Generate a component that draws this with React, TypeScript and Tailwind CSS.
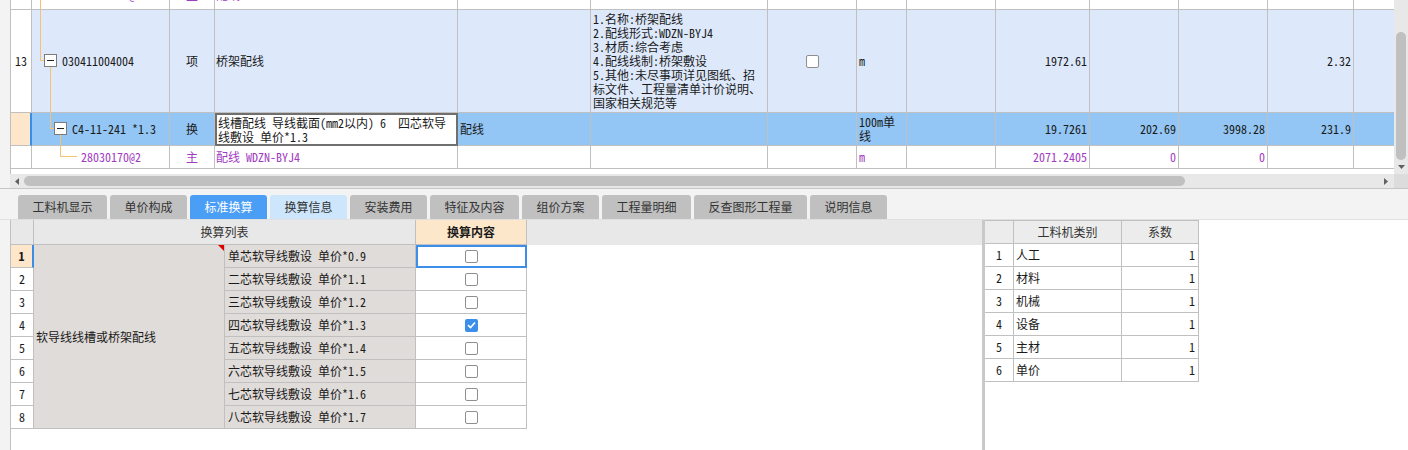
import React from "react";

const mono = "font-[family-name:'Noto_Sans_Mono_CJK_SC','Noto_Sans_CJK_SC',monospace]";
const purple = "text-[#a13bc2]";

// top grid column widths (incl. right border)
const W = [
  "w-[21px]", "w-[138px]", "w-[45px]", "w-[243px]", "w-[133px]", "w-[177px]", "w-[89px]",
  "w-[50px]", "w-[89px]", "w-[94px]", "w-[89px]", "w-[89px]", "w-[86px]", "w-[40px]",
];

const Cell = ({ i, className = "", children }: { i: number; className?: string; children?: React.ReactNode }) => (
  <div
    className={`${W[i]} shrink-0 h-full border-b border-[#c0c0c0] ${i < 13 ? "border-r" : ""} flex items-center overflow-hidden ${className}`}
  >
    {children}
  </div>
);

const Line = ({ className }: { className: string }) => <span className={`absolute bg-[#f6c26e] ${className}`} />;

const TreeBox = ({ className }: { className: string }) => (
  <span className={`absolute w-[13px] h-[13px] border border-[#7c7c7c] bg-white flex items-center justify-center ${className}`}>
    <span className="w-[7px] h-[1px] bg-[#222]" />
  </span>
);

const Check = ({ on = false }: { on?: boolean }) =>
  on ? (
    <span className="w-[13px] h-[13px] rounded-[2px] bg-[#3b8fe8] flex items-center justify-center">
      <svg width="9" height="8" viewBox="0 0 9 8">
        <path d="M1 4.2 L3.5 6.5 L8 1.5" stroke="white" strokeWidth="1.6" fill="none" />
      </svg>
    </span>
  ) : (
    <span className="w-[13px] h-[13px] rounded-[2px] border border-[#8f8f8f] bg-white" />
  );

const tabs = [
  { t: "工料机显示", w: "w-[89px]" },
  { t: "单价构成", w: "w-[77px]" },
  { t: "标准换算", w: "w-[77px]", active: true },
  { t: "换算信息", w: "w-[77px]", light: true },
  { t: "安装费用", w: "w-[77px]" },
  { t: "特征及内容", w: "w-[89px]" },
  { t: "组价方案", w: "w-[77px]" },
  { t: "工程量明细", w: "w-[89px]" },
  { t: "反查图形工程量", w: "w-[113px]" },
  { t: "说明信息", w: "w-[77px]" },
];

const conv = [
  "单芯软导线敷设 单价*0.9",
  "二芯软导线敷设 单价*1.1",
  "三芯软导线敷设 单价*1.2",
  "四芯软导线敷设 单价*1.3",
  "五芯软导线敷设 单价*1.4",
  "六芯软导线敷设 单价*1.5",
  "七芯软导线敷设 单价*1.6",
  "八芯软导线敷设 单价*1.7",
];

const kinds = ["人工", "材料", "机械", "设备", "主材", "单价"];

export default function App() {
  return (
    <div className={`w-[1408px] h-[450px] overflow-hidden bg-[#f3f3f3] flex flex-col text-[12px] text-[#1a1a1a] ${mono}`}>
      {/* top grid */}
      <div className="flex h-[188px] shrink-0">
        <div className="w-[10px] shrink-0" />
        <div className="w-[1384px] shrink-0 flex flex-col">
          <div className="h-[174px] bg-white border-l border-[#c0c0c0] overflow-hidden flex flex-col">
            {/* partial row */}
            <div className={`flex h-[29px] -mt-[19px] shrink-0 ${purple}`}>
              <Cell i={0} />
              <Cell i={1} className="relative pl-[49px]">
                <Line className="left-[8px] top-0 bottom-0 w-[1px]" />
                28030170@1
              </Cell>
              <Cell i={2} className="justify-center">主</Cell>
              <Cell i={3} className="pl-[1px]">配线 WDZN-BYJ4</Cell>
              <Cell i={4} />
              <Cell i={5} />
              <Cell i={6} />
              <Cell i={7} className="pl-[2px]">m</Cell>
              <Cell i={8} />
              <Cell i={9} className="justify-end pr-[2px]">2271.0226</Cell>
              <Cell i={10} className="justify-end pr-[2px]">0</Cell>
              <Cell i={11} className="justify-end pr-[2px]">0</Cell>
              <Cell i={12} />
              <Cell i={13} />
            </div>
            {/* row 13 */}
            <div className="flex h-[103px] shrink-0 bg-[#dde9fb]">
              <Cell i={0} className="justify-center bg-white">13</Cell>
              <Cell i={1} className="relative pl-[30px]">
                <Line className="left-[8px] top-0 h-[50px] w-[1px]" />
                <Line className="left-[8px] top-[50px] h-[1px] w-[4px]" />
                <TreeBox className="left-[12px] top-[44px]" />
                <Line className="left-[18px] top-[57px] bottom-0 w-[1px]" />
                030411004004
              </Cell>
              <Cell i={2} className="justify-center">项</Cell>
              <Cell i={3} className="pl-[1px]">桥架配线</Cell>
              <Cell i={4} />
              <Cell i={5} className="pl-[2px] leading-[14px]">
                <div>
                  1.名称:桥架配线
                  <br />
                  2.配线形式:WDZN-BYJ4
                  <br />
                  3.材质:综合考虑
                  <br />
                  4.配线线制:桥架敷设
                  <br />
                  5.其他:未尽事项详见图纸、招
                  <br />
                  标文件、工程量清单计价说明、
                  <br />
                  国家相关规范等
                </div>
              </Cell>
              <Cell i={6} className="justify-center">
                <Check />
              </Cell>
              <Cell i={7} className="pl-[2px]">m</Cell>
              <Cell i={8} />
              <Cell i={9} className="justify-end pr-[2px]">1972.61</Cell>
              <Cell i={10} />
              <Cell i={11} />
              <Cell i={12} className="justify-end pr-[2px]">2.32</Cell>
              <Cell i={13} />
            </div>
            {/* selected row */}
            <div className="flex h-[33px] shrink-0 bg-[#93c6f4]">
              <div className="w-[21px] shrink-0 h-full border-b border-[#c0c0c0] border-r-2 border-r-[#3a8ee6] bg-[#fde6c9]" />
              <Cell i={1} className="relative pl-[40px]">
                <Line className="left-[18px] top-0 h-[15px] w-[1px]" />
                <Line className="left-[18px] top-[15px] h-[1px] w-[4px]" />
                <TreeBox className="left-[22px] top-[9px]" />
                <Line className="left-[28px] top-[22px] bottom-0 w-[1px]" />
                C4-11-241 *1.3
              </Cell>
              <Cell i={2} className="justify-center">换</Cell>
              <div className="w-[243px] shrink-0 h-full border-2 border-[#6f6f6f] bg-white flex items-center pl-[1px] leading-[14px] overflow-hidden">
                <div className="whitespace-pre">
                  {"线槽配线 导线截面(mm2以内) 6  四芯软导"}
                  <br />
                  {"线敷设 单价*1.3"}
                </div>
              </div>
              <Cell i={4} className="pl-[2px]">配线</Cell>
              <Cell i={5} />
              <Cell i={6} />
              <Cell i={7} className="pl-[2px] leading-[14px]">
                <div>
                  100m单
                  <br />
                  线
                </div>
              </Cell>
              <Cell i={8} />
              <Cell i={9} className="justify-end pr-[2px]">19.7261</Cell>
              <Cell i={10} className="justify-end pr-[2px]">202.69</Cell>
              <Cell i={11} className="justify-end pr-[2px]">3998.28</Cell>
              <Cell i={12} className="justify-end pr-[2px]">231.9</Cell>
              <Cell i={13} />
            </div>
            {/* material row */}
            <div className={`flex h-[23px] shrink-0 ${purple}`}>
              <Cell i={0} />
              <Cell i={1} className="relative pl-[49px]">
                <Line className="left-[28px] top-0 h-[10px] w-[1px]" />
                <Line className="left-[28px] top-[10px] h-[1px] w-[17px]" />
                28030170@2
              </Cell>
              <Cell i={2} className="justify-center">主</Cell>
              <Cell i={3} className="pl-[1px]">配线 WDZN-BYJ4</Cell>
              <Cell i={4} />
              <Cell i={5} />
              <Cell i={6} />
              <Cell i={7} className="pl-[2px]">m</Cell>
              <Cell i={8} />
              <Cell i={9} className="justify-end pr-[2px]">2071.2405</Cell>
              <Cell i={10} className="justify-end pr-[2px]">0</Cell>
              <Cell i={11} className="justify-end pr-[2px]">0</Cell>
              <Cell i={12} />
              <Cell i={13} />
            </div>
          </div>
          {/* horizontal scrollbar */}
          <div className="h-[14px] bg-[#e8e8e8] flex items-center pl-[5px]">
            <svg width="4" height="7" viewBox="0 0 4 7">
              <path d="M4 0 L0 3.5 L4 7 Z" fill="#606060" />
            </svg>
            <div className="ml-[5px] w-[1161px] h-[10px] rounded-full bg-[#c0c0c0]" />
            <div className="flex-1" />
            <svg width="4" height="7" viewBox="0 0 4 7" className="mr-[6px]">
              <path d="M0 0 L4 3.5 L0 7 Z" fill="#606060" />
            </svg>
          </div>
        </div>
        {/* vertical scrollbar */}
        <div className="w-[14px] shrink-0 flex flex-col">
          <div className="h-[174px] bg-[#e8e8e8] flex flex-col items-center pt-[32px]">
            <div className="w-[10px] h-[128px] rounded-full bg-[#c0c0c0]" />
            <svg width="7" height="4" viewBox="0 0 7 4" className="mt-[5px]">
              <path d="M0 0 L7 0 L3.5 4 Z" fill="#606060" />
            </svg>
          </div>
          <div className="h-[14px] bg-[#dcdcdc]" />
        </div>
      </div>
      <div className="h-[1px] shrink-0 bg-[#c6c6c6]" />

      {/* tabs */}
      <div className="h-[31px] shrink-0 flex items-end gap-[3px] pl-[18px] border-b border-[#e0e0e0] font-[family-name:'Noto_Sans_CJK_SC',sans-serif]">
        {tabs.map((t) => (
          <div
            key={t.t}
            className={`${t.w} h-[24px] rounded-t-[3px] flex items-center justify-center ${
              t.active ? "bg-[#4b9ef6] text-white" : t.light ? "bg-[#cde6fb] text-[#333]" : "bg-[#c0c0c0] text-[#333]"
            }`}
          >
            {t.t}
          </div>
        ))}
      </div>

      {/* bottom */}
      <div className="flex flex-1">
        <div className="w-[10px] shrink-0" />
        <div className="w-[972px] shrink-0 bg-white border-l border-[#c0c0c0]">
          <div className="flex h-[25px] bg-[#e8e8e8]">
            <div className="w-[23px] border-r border-b border-[#c0c0c0]" />
            <div className="w-[382px] border-r border-b border-[#c0c0c0] flex items-center justify-center text-[#333]">
              换算列表
            </div>
            <div className="w-[111px] border-r border-b border-[#c0c0c0] bg-[#fde7ca] flex items-center justify-center font-bold">
              换算内容
            </div>
          </div>
          <div className="flex">
            <div className="w-[23px] flex flex-col">
              {conv.map((_, i) => (
                <div
                  key={i}
                  className={`h-[23px] border-b border-[#c0c0c0] flex items-center justify-center ${
                    i === 0 ? "bg-[#fde6c9] border-r-2 border-r-[#3a8ee6] font-bold" : "border-r"
                  }`}
                >
                  {i + 1}
                </div>
              ))}
            </div>
            <div className="relative w-[191px] h-[184px] bg-[#e0dcd9] border-r border-b border-[#c0c0c0] flex items-center pl-[2px]">
              <span className="absolute top-0 right-0 w-0 h-0 border-t-[6px] border-t-[#e00000] border-l-[6px] border-l-transparent" />
              软导线线槽或桥架配线
            </div>
            <div className="w-[191px] flex flex-col">
              {conv.map((c) => (
                <div key={c} className="h-[23px] bg-[#e0dcd9] border-r border-b border-[#c0c0c0] flex items-center pl-[3px]">
                  {c}
                </div>
              ))}
            </div>
            <div className="w-[111px] flex flex-col">
              {conv.map((c, i) => (
                <div
                  key={c}
                  className={`h-[23px] flex items-center justify-center ${
                    i === 0 ? "border-2 border-[#3d8ee9]" : "border-r border-b border-[#c0c0c0]"
                  }`}
                >
                  <Check on={i === 3} />
                </div>
              ))}
            </div>
          </div>
        </div>
        <div className="w-[3px] shrink-0 bg-[#c9c9c9]" />
        <div className="flex-1 bg-white">
          <div className="w-[214px] border-t border-[#c0c0c0]">
            <div className="flex h-[23px] bg-[#ececec] text-[#333]">
              <div className="w-[29px] border-r border-b border-[#c0c0c0]" />
              <div className="w-[108px] border-r border-b border-[#c0c0c0] flex items-center justify-center">工料机类别</div>
              <div className="w-[77px] border-r border-b border-[#c0c0c0] flex items-center justify-center">系数</div>
            </div>
            {kinds.map((k, i) => (
              <div key={k} className="flex h-[23px]">
                <div className="w-[29px] border-r border-b border-[#c0c0c0] flex items-center justify-center">{i + 1}</div>
                <div className="w-[108px] border-r border-b border-[#c0c0c0] flex items-center pl-[2px]">{k}</div>
                <div className="w-[77px] border-r border-b border-[#c0c0c0] flex items-center justify-end pr-[3px]">1</div>
              </div>
            ))}
          </div>
        </div>
      </div>
    </div>
  );
}
